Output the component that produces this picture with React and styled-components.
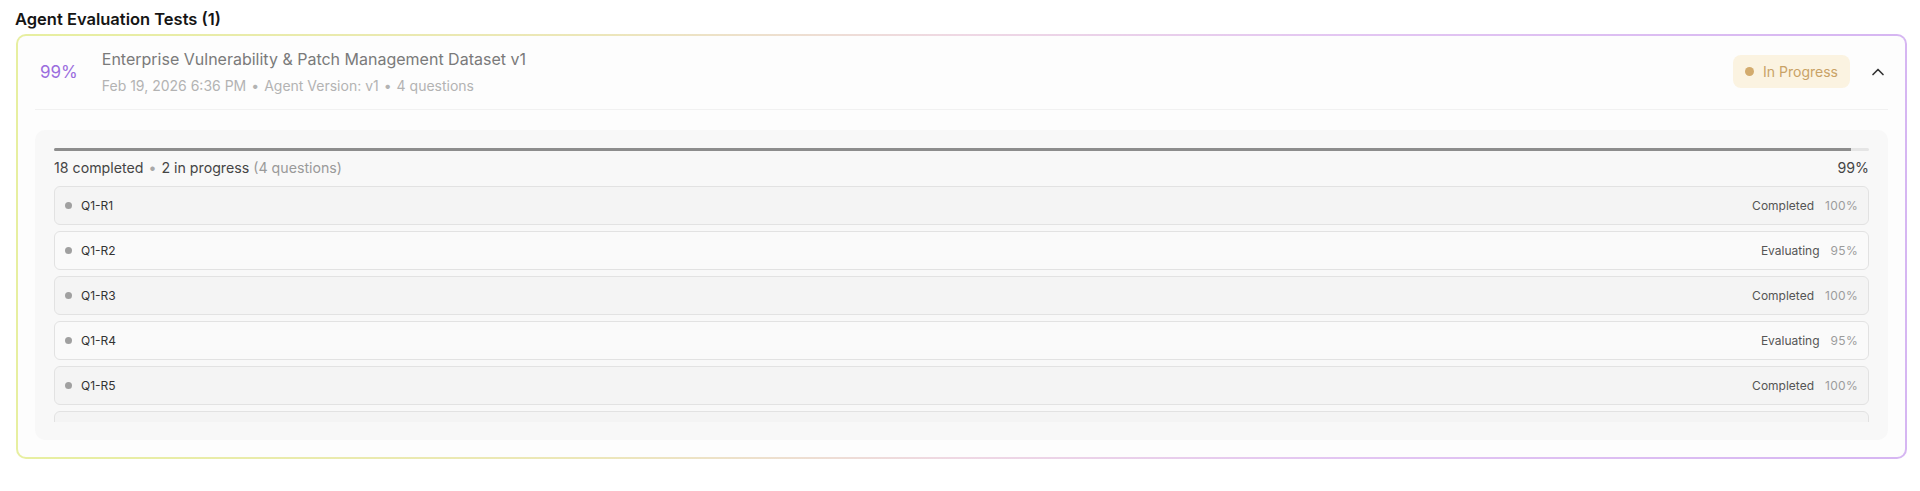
import React from "react";
import styled, { createGlobalStyle } from "styled-components";
import { ChevronUp } from "lucide-react";

const GlobalStyle = createGlobalStyle`
  html, body { margin: 0; padding: 0; background: #ffffff; }
  body { font-family: Inter, "Noto Sans", sans-serif; -webkit-font-smoothing: antialiased; }
  * { box-sizing: border-box; }
`;

const Page = styled.div`
  padding: 7px 13px 0 16px;
`;

const Heading = styled.h2`
  margin: 0 0 3px -1px;
  font-size: 16.5px;
  line-height: 24px;
  font-weight: 600;
  color: #151515;
`;

const Card = styled.section`
  border: 2px solid transparent;
  border-radius: 10px;
  background:
    linear-gradient(#fdfdfd, #fdfdfd) padding-box,
    linear-gradient(90deg, #e7efa0 0%, #ece7b8 30%, #efd8e4 50%, #e3c6f2 70%, #d6b6f2 100%) border-box;
  padding: 0 17px 17px;
`;

const Header = styled.div`
  display: flex;
  align-items: center;
  padding: 11px 0 13px 5px;
  border-bottom: 1px solid #f1f1f1;
`;

const Score = styled.div`
  font-size: 17px;
  line-height: 24px;
  color: #9b6dde;
  margin-right: 24px;
`;

const Info = styled.div`
  display: flex;
  flex-direction: column;
  gap: 5px;
  flex: 1;
  min-width: 0;
`;

const Title = styled.div`
  font-size: 16px;
  line-height: 24px;
  color: #7a7a7a;
`;

const Meta = styled.div`
  font-size: 14px;
  line-height: 20px;
  color: #b3b3b3;
`;

const Sep = styled.span`
  margin: 0 5px;
  color: ${(p) => p.$color || "inherit"};
`;

const Badge = styled.div`
  display: flex;
  align-items: center;
  gap: 9px;
  height: 33px;
  padding: 0 12px;
  border-radius: 8px;
  background: #fbf3e1;
  color: #c9a266;
  font-size: 14px;
`;

const BadgeDot = styled.span`
  width: 9px;
  height: 9px;
  border-radius: 50%;
  background: #d3ab6d;
`;

const Toggle = styled.button`
  display: flex;
  align-items: center;
  justify-content: center;
  margin-left: 18px;
  padding: 0;
  border: 0;
  background: transparent;
  color: #333;
  cursor: pointer;
`;

const Panel = styled.div`
  margin-top: 20px;
  padding: 18px 19px 18px;
  border-radius: 10px;
  background: #f8f8f8;
`;

const Track = styled.div`
  height: 3px;
  border-radius: 2px;
  background: #e5e5e5;
  overflow: hidden;
`;

const Fill = styled.div`
  height: 100%;
  background: #8d8d8d;
`;

const Summary = styled.div`
  display: flex;
  justify-content: space-between;
  margin-top: 7px;
  font-size: 14.2px;
  line-height: 20px;
  color: #454545;
`;

const Muted = styled.span`
  color: #9a9a9a;
`;

const List = styled.div`
  display: flex;
  flex-direction: column;
  gap: 6px;
  margin-top: 8px;
  max-height: 236px;
  overflow: hidden;
`;

const Row = styled.div`
  flex: none;
  display: flex;
  align-items: center;
  height: 39px;
  padding: 0 10px;
  border: 1px solid #e2e2e2;
  border-radius: 6px;
  background: ${(p) => (p.$done ? "#f4f4f4" : "#fafafa")};
  font-size: 12px;
`;

const Dot = styled.span`
  width: 7px;
  height: 7px;
  border-radius: 50%;
  background: #a0a0a0;
  margin-right: 9px;
`;

const RowLabel = styled.span`
  flex: 1;
  color: #333;
`;

const Status = styled.span`
  color: #555;
  margin-right: 11px;
`;

const Pct = styled.span`
  color: #9c9c9c;
  letter-spacing: 0.3px;
`;

const rows = [
  { id: "Q1-R1", done: true },
  { id: "Q1-R2", done: false },
  { id: "Q1-R3", done: true },
  { id: "Q1-R4", done: false },
  { id: "Q1-R5", done: true },
  { id: "Q2-R1", done: true },
  { id: "Q2-R2", done: true },
  { id: "Q2-R3", done: true },
];

export default function App() {
  return (
    <>
      <GlobalStyle />
      <Page>
        <Heading>Agent Evaluation Tests (1)</Heading>
        <Card>
          <Header>
            <Score>99%</Score>
            <Info>
              <Title>Enterprise Vulnerability &amp; Patch Management Dataset v1</Title>
              <Meta>
                Feb 19, 2026 6:36 PM<Sep>•</Sep>Agent Version: v1<Sep>•</Sep>4 questions
              </Meta>
            </Info>
            <Badge>
              <BadgeDot />
              In Progress
            </Badge>
            <Toggle aria-label="Collapse">
              <ChevronUp size={20} strokeWidth={2} />
            </Toggle>
          </Header>
          <Panel>
            <Track>
              <Fill style={{ width: "99%" }} />
            </Track>
            <Summary>
              <span>
                18 completed<Sep $color="#a8a8a8">•</Sep>2 in progress <Muted>(4 questions)</Muted>
              </span>
              <span>99%</span>
            </Summary>
            <List>
              {rows.map((r) => (
                <Row key={r.id} $done={r.done}>
                  <Dot />
                  <RowLabel>{r.id}</RowLabel>
                  <Status>{r.done ? "Completed" : "Evaluating"}</Status>
                  <Pct>{r.done ? "100%" : "95%"}</Pct>
                </Row>
              ))}
            </List>
          </Panel>
        </Card>
      </Page>
    </>
  );
}
